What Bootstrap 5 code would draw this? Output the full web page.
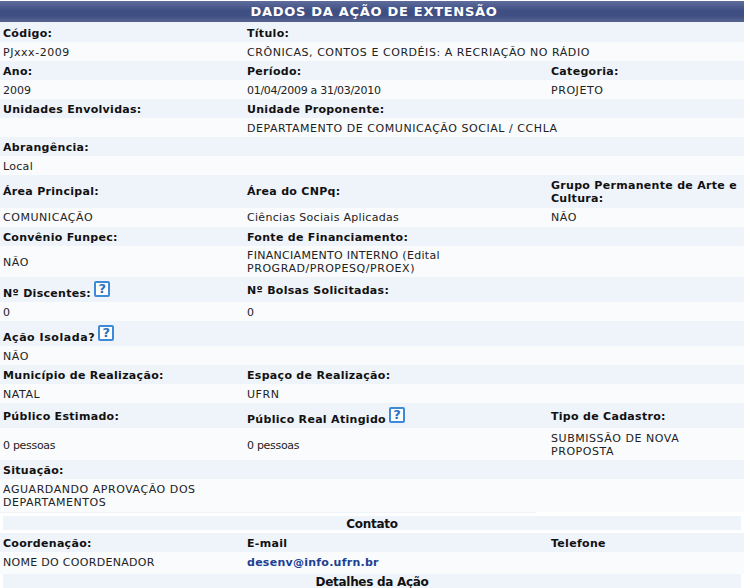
<!DOCTYPE html>
<html lang="pt-BR">
<head>
    <meta charset="UTF-8">
    <meta name="viewport" content="width=device-width, initial-scale=1.0">
    <title>Dados da Ação de Extensão</title>
    <link href="https://cdn.jsdelivr.net/npm/bootstrap@5.3.0/dist/css/bootstrap.min.css" rel="stylesheet">
    <style>
        body {
            background-color: #fff;
            color: #222;
            font-family: "DejaVu Sans", Verdana, sans-serif;
            font-size: 11px;
            line-height: 13px;
            overflow: hidden;
        }
        .visao {
            width: 744px;
            table-layout: fixed;
            border-collapse: separate;
            border-spacing: 0;
        }
        .visao td, .visao th {
            padding: 2px 0 0 3px;
            vertical-align: middle;
        }
        .visao caption {
            caption-side: top;
            padding: 0 0 0 4px;
            height: 21px;
            margin-top: 1px;
            color: #fff;
            font-size: 13px;
            line-height: 21px;
            font-weight: bold;
            letter-spacing: 0.7px;
            text-align: center;
            background: linear-gradient(#5f6d9c, #404f83 45%, #404f83 70%, #56648f);
        }
        .rotulo { background-color: #eff3fa; height: 19px; }
        .rotulo th { font-weight: bold; color: #111; letter-spacing: 0.3px; }
        .valor { background-color: #f9fbfd; height: 19px; }
        .rotulo.primeira { height: 20px; }
        .rotulo.alta { height: 33px; }
        .rotulo.icone { height: 25px; }
        .valor.duas { height: 32px; }
        .valor.curta { height: 31px; }
        .valor.longa { height: 33px; }
        .valor.contato { height: 22px; }
        .visao .rotulo.alta th, .visao .rotulo.alta + .valor td, .visao .valor.curta td, .visao .valor.longa td, .visao .sem-recuo { padding-top: 0; }
        .visao .valor.curta td:first-child { padding-top: 2px; }
        .visao .valor.contato td { padding-bottom: 4px; }
        .visao .separador td { padding: 0; height: 4px; vertical-align: top; }
        .fio { width: 536px; height: 1px; background-color: #eff3fa; }
        .visao .secao td { padding: 0 3px; height: 17px; vertical-align: top; }
        .secao-faixa {
            background-color: #eff3fa;
            color: #111;
            font-size: 12px;
            font-weight: bold;
            letter-spacing: -0.3px;
            line-height: 15px;
            height: 14px;
            padding-top: 1px;
            text-align: center;
        }
        .caixa-alta { letter-spacing: 0.55px; }
        .caixa-media { letter-spacing: 0.3px; }
        .compacto { letter-spacing: -0.3px; }
        .ajuda {
            display: inline-block;
            width: 16px;
            height: 16px;
            margin-left: -1px;
            border: 2px solid #3f8ad8;
            border-radius: 2px;
            background-color: #fff;
            color: #2b6fc0;
            font-size: 13px;
            font-weight: bold;
            letter-spacing: 0;
            line-height: 12px;
            text-align: center;
            vertical-align: 3px;
        }
        .desce { position: relative; top: 1px; }
        .correio { color: #1c3f94; font-weight: bold; letter-spacing: 0.26px; text-decoration: none; }
    </style>
</head>
<body>
    <!-- Dados da acao -->
    <table class="visao">
        <caption>DADOS DA AÇÃO DE EXTENSÃO</caption>
        <colgroup>
            <col style="width: 244px">
            <col style="width: 304px">
            <col style="width: 196px">
        </colgroup>
        <tbody>
            <tr class="rotulo primeira"><th>Código:</th><th colspan="2">Título:</th></tr>
            <tr class="valor"><td class="caixa-alta">PJxxx-2009</td><td colspan="2" class="caixa-alta">CRÔNICAS, CONTOS E CORDÉIS: A RECRIAÇÃO NO RÁDIO</td></tr>
            <tr class="rotulo"><th>Ano:</th><th>Período:</th><th>Categoria:</th></tr>
            <tr class="valor"><td>2009</td><td class="compacto">01/04/2009 a 31/03/2010</td><td class="caixa-alta">PROJETO</td></tr>
            <tr class="rotulo"><th>Unidades Envolvidas:</th><th colspan="2">Unidade Proponente:</th></tr>
            <tr class="valor"><td></td><td colspan="2" class="caixa-alta">DEPARTAMENTO DE COMUNICAÇÃO SOCIAL / CCHLA</td></tr>
            <tr class="rotulo"><th colspan="3">Abrangência:</th></tr>
            <tr class="valor"><td colspan="3" class="caixa-media">Local</td></tr>
            <tr class="rotulo alta"><th>Área Principal:</th><th>Área do CNPq:</th><th>Grupo Permanente de Arte e Cultura:</th></tr>
            <tr class="valor"><td class="caixa-alta">COMUNICAÇÃO</td><td class="caixa-media">Ciências Sociais Aplicadas</td><td class="caixa-alta">NÃO</td></tr>
            <tr class="rotulo"><th>Convênio Funpec:</th><th colspan="2">Fonte de Financiamento:</th></tr>
            <tr class="valor curta"><td class="caixa-alta">NÃO</td><td colspan="2" class="caixa-media">FINANCIAMENTO INTERNO (Edital<br><span class="caixa-alta">PROGRAD/PROPESQ/PROEX)</span></td></tr>
            <tr class="rotulo icone"><th class="sem-recuo"><span class="desce">Nº Discentes:</span> <span class="ajuda">?</span></th><th colspan="2">Nº Bolsas Solicitadas:</th></tr>
            <tr class="valor"><td>0</td><td colspan="2">0</td></tr>
            <tr class="rotulo icone"><th colspan="3" class="sem-recuo"><span class="desce caixa-alta">Ação Isolada?</span> <span class="ajuda">?</span></th></tr>
            <tr class="valor"><td colspan="3" class="caixa-alta">NÃO</td></tr>
            <tr class="rotulo"><th>Município de Realização:</th><th colspan="2">Espaço de Realização:</th></tr>
            <tr class="valor"><td class="caixa-alta">NATAL</td><td colspan="2" class="caixa-alta">UFRN</td></tr>
            <tr class="rotulo icone"><th>Público Estimado:</th><th class="sem-recuo"><span class="desce">Público Real Atingido</span> <span class="ajuda">?</span></th><th>Tipo de Cadastro:</th></tr>
            <tr class="valor duas"><td class="compacto">0 pessoas</td><td class="compacto">0 pessoas</td><td class="caixa-alta">SUBMISSÃO DE NOVA<br>PROPOSTA</td></tr>
            <tr class="rotulo"><th colspan="3">Situação:</th></tr>
            <tr class="valor longa"><td colspan="3" class="caixa-alta">AGUARDANDO APROVAÇÃO DOS<br>DEPARTAMENTOS</td></tr>
            <tr class="separador"><td colspan="3"><div class="fio"></div></td></tr>
            <tr class="secao"><td colspan="3"><div class="secao-faixa">Contato</div></td></tr>
            <tr class="rotulo"><th>Coordenação:</th><th>E-mail</th><th>Telefone</th></tr>
            <tr class="valor contato"><td class="caixa-media">NOME DO COORDENADOR</td><td><a class="correio" href="#">desenv@info.ufrn.br</a></td><td></td></tr>
            <tr class="secao"><td colspan="3"><div class="secao-faixa">Detalhes da Ação</div></td></tr>
        </tbody>
    </table>

    <script src="https://cdn.jsdelivr.net/npm/bootstrap@5.3.0/dist/js/bootstrap.bundle.min.js"></script>
</body>
</html>
